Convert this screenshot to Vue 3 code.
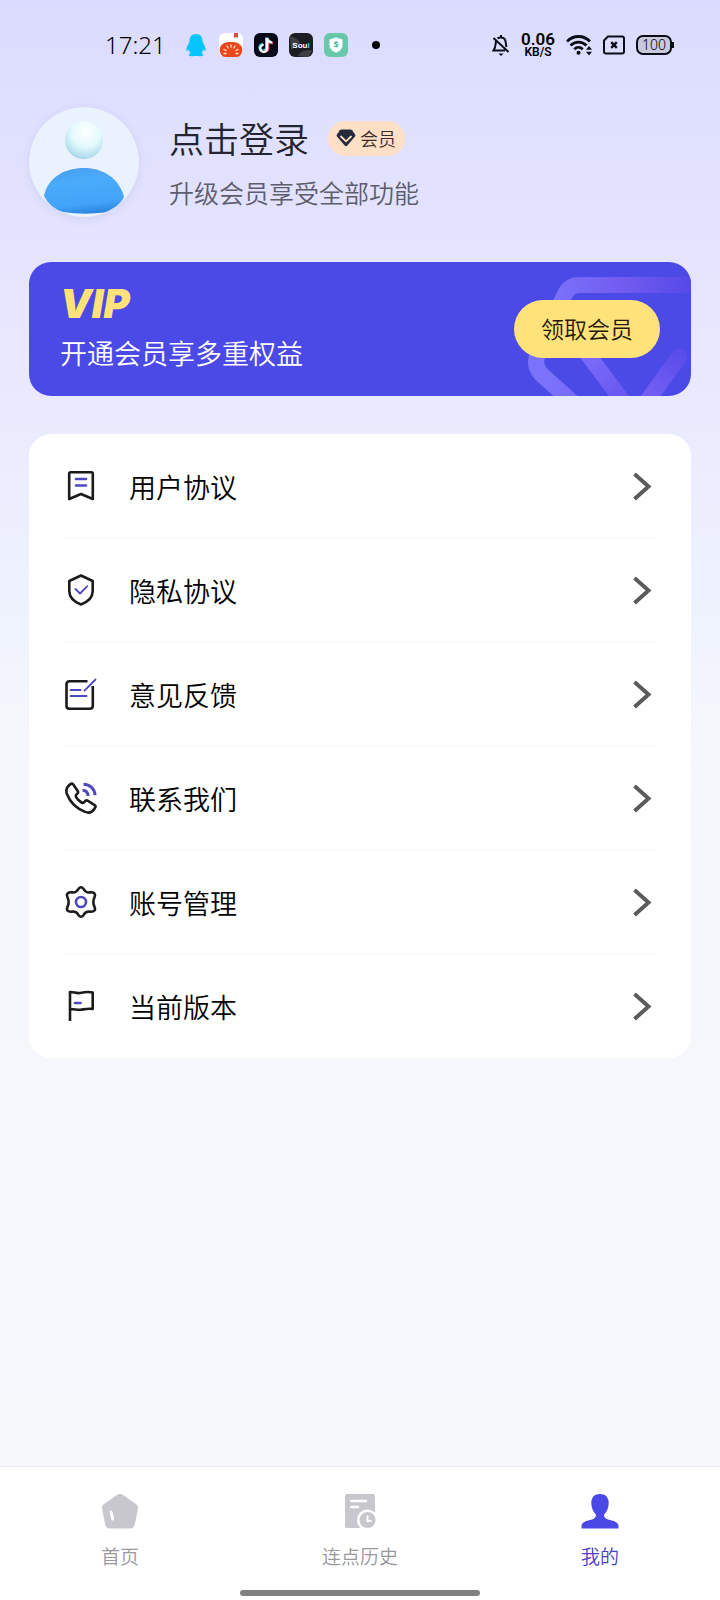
<script setup>
const menu = [
  { id: 'terms', label: '用户协议' },
  { id: 'privacy', label: '隐私协议' },
  { id: 'feedback', label: '意见反馈' },
  { id: 'contact', label: '联系我们' },
  { id: 'account', label: '账号管理' },
  { id: 'version', label: '当前版本' },
]
</script>

<template>
  <div class="page">
    <header class="status">
      <span class="time">17:21</span>
      <div class="apps">
        <svg width="24" height="24" viewBox="0 0 24 24" aria-hidden="true">
          <path d="M12 1C7.400 1 5.300 4.200 5.400 9c-1.400 2.400-3.300 5.900-3.100 8.600.4.900 1.600 0 2.300-1.300.3 1.600 1 2.900 1.900 3.900-1.300.5-2 1.300-1.600 2.300.6 1 5.200.9 7.100.3 1.900.6 6.500.7 7.100-.3.400-1-.3-1.800-1.600-2.300.9-1 1.600-2.300 1.900-3.900.7 1.300 1.900 2.200 2.300 1.300.2-2.700-1.700-6.200-3.100-8.600C18.700 4.200 16.600 1 12 1z" fill="#06c5fd" />
        </svg>
        <svg width="24" height="24" viewBox="0 0 24 24" aria-hidden="true">
          <rect width="24" height="24" rx="6" fill="#fff" />
          <path d="M15 0h4v5l-2-1-2 1z" fill="#cf4f3c" />
          <path d="M1 14.500C2.500 10.800 6 9 12 9s9.500 1.800 11 5.500c.6 2 .4 5-1 7-1 1.700-2.500 2.500-4.500 2.500h-11C4.500 24 3 23.200 2 21.500c-1.400-2-1.600-5-1-7z" fill="#e8481c" />
          <path d="M12 12v2M8 13l1 2M16 13l-1 2M5 16.500l2 1M19 16.500l-2 1M5 20.500h2M17 20.500h2" stroke="#ffe3d2" stroke-width="1.300" stroke-linecap="round" />
        </svg>
        <svg width="24" height="24" viewBox="0 0 24 24" aria-hidden="true">
          <rect width="24" height="24" rx="6" fill="#080918" />
          <g fill="none" stroke-width="2.600">
            <path d="M12.300 4.500v10a3.300 3.300 0 1 1-3.300-3.300M12.300 5c.4 2.500 2.400 4 5 4" stroke="#27e4e2" />
            <path d="M14 6v10a3.500 3.500 0 0 1-5.500 2M14 6c.4 2.500 2.400 4 5 4" stroke="#f83b5c" />
            <path d="M13.200 5v10.500a3.500 3.500 0 1 1-3.500-3.500M13.200 5c.4 2.800 2.400 4.300 5 4.300" stroke="#fff" stroke-width="2.200" />
          </g>
        </svg>
        <svg width="24" height="24" viewBox="0 0 24 24" aria-hidden="true">
          <rect width="24" height="24" rx="6" fill="#1c1d22" />
          <path d="M1 3Q9 5 11 10L2 17zM9 23q3-7 14-6-1 6-6 7z" fill="#55565a" opacity=".6" />
          <text x="12" y="15" text-anchor="middle" class="soul">Sou<tspan fill="#43d9ce">l</tspan></text>
        </svg>
        <svg width="24" height="24" viewBox="0 0 24 24" aria-hidden="true">
          <rect width="24" height="24" rx="6" fill="#67c9aa" />
          <path d="M12 4.500l6.500 2V12c0 3.500-2.500 6-6.500 7.700C8 18 5.500 15.500 5.500 12V6.500z" fill="#fff" />
          <text x="12" y="15" text-anchor="middle" class="coin">$</text>
        </svg>
      </div>
      <span class="dot"></span>
      <div class="signals">
        <svg width="18" height="22" viewBox="0 0 18 22" fill="none" stroke="#0c0d18" stroke-width="2" aria-hidden="true">
          <path d="M5.500 4.500C7 3.200 11 3.200 12.600 5c1.600 1.800 1 5.300 1.900 8M4 7c-.5 3 0 6-2.500 9.500H13M9 1v2M1.500 4l15 14" />
          <path d="M6.500 19.500h5L9 22z" fill="#0c0d18" stroke="none" />
        </svg>
        <div class="speed"><b>0.06</b><span>KB/S</span></div>
        <svg width="26" height="22" viewBox="0 0 26 22" fill="none" stroke="#0c0d18" stroke-width="2.800" aria-hidden="true">
          <path d="M1 7.500C7.500.8 17.500.8 24 7.500M4.500 11.500c4.500-4.600 11.500-4.600 16 0M8.300 15.200c2.400-2.400 6-2.400 8.400 0" />
          <circle cx="12.500" cy="18.800" r="2" fill="#0c0d18" stroke="none" />
          <path d="M20 15.800L23 12l3 3.800zM20 17.800L23 21.600l3-3.800z" fill="#0c0d18" stroke="none" />
        </svg>
        <svg width="22" height="20" viewBox="0 0 22 20" fill="none" stroke="#0c0d18" stroke-width="2" aria-hidden="true">
          <path d="M5 1.500h14q2 0 2 2v13q0 2-2 2H3q-2 0-2-2v-11z" />
          <path d="M8.200 7.200l5.600 5.600M13.800 7.200l-5.600 5.600" stroke-width="2.400" />
        </svg>
        <div class="battery">100</div>
      </div>
    </header>

    <section class="profile">
      <svg class="avatar" width="110" height="110" viewBox="0 0 110 110" role="img" aria-label="头像">
        <defs>
          <radialGradient id="head" cx=".55" cy=".3" r=".75">
            <stop offset="0" stop-color="#fff" />
            <stop offset=".5" stop-color="#e4fafd" />
            <stop offset=".85" stop-color="#b5dfee" />
            <stop offset="1" stop-color="#8fc4dd" />
          </radialGradient>
          <linearGradient id="body" x1=".3" y1="0" x2=".5" y2="1">
            <stop offset="0" stop-color="#489ff0" />
            <stop offset=".3" stop-color="#4aabfb" />
            <stop offset=".8" stop-color="#43a3f8" />
            <stop offset="1" stop-color="#2b86e0" />
          </linearGradient>
        </defs>
        <circle cx="55" cy="55" r="55" fill="#e9f2fd" />
        <circle cx="55" cy="33" r="19" fill="url(#head)" />
        <path d="M15 89C19 70 36 61 55 61s35 10 40 29c-3 7-12 13-20 15.500Q55 108 34 105 21 101 15 89z" fill="url(#body)" />
      </svg>
      <div class="who">
        <div class="name-row">
          <h1>点击登录</h1>
          <span class="badge">
            <svg width="20" height="18" viewBox="0 0 20 18" aria-hidden="true">
              <path d="M5.500.5h9q1 0 1.600.8l3 4.200q.7 1-.1 2l-7.700 9q-1.300 1.500-2.600 0L1 7.500q-.8-1-.1-2l3-4.200Q4.500.5 5.500.5z" fill="#262a3e" />
              <path d="M5 7.500l5 4.800 5-4.800" fill="none" stroke="#ffe0c2" stroke-width="1.800" stroke-linecap="round" />
            </svg>
            会员
          </span>
        </div>
        <p>升级会员享受全部功能</p>
      </div>
    </section>

    <section class="vip">
      <svg class="gem" width="180" height="134" viewBox="0 0 180 134" fill="none" stroke-width="16" aria-hidden="true">
        <defs>
          <linearGradient id="rim" gradientUnits="userSpaceOnUse" x1="40" y1="0" x2="180" y2="0">
            <stop offset="0" stop-color="#7b72fb" />
            <stop offset=".5" stop-color="#725cf0" />
            <stop offset="1" stop-color="#5549e8" />
          </linearGradient>
          <linearGradient id="left" gradientUnits="userSpaceOnUse" x1="66" y1="78" x2="116" y2="140">
            <stop offset="0" stop-color="#8174fd" />
            <stop offset="1" stop-color="#6654ef" />
          </linearGradient>
          <linearGradient id="right" gradientUnits="userSpaceOnUse" x1="168" y1="90" x2="138" y2="136">
            <stop offset="0" stop-color="#5a4cea" />
            <stop offset="1" stop-color="#7460f4" />
          </linearGradient>
        </defs>
        <path d="M180 23H68Q58 23 53 34L27 92q-5 11 3 20l38 34" stroke="url(#rim)" />
        <path d="M168 95l-42 58" stroke="url(#right)" stroke-linecap="round" />
        <path d="M66 78l54 72" stroke="url(#left)" />
      </svg>
      <div class="offer">
        <strong>VIP</strong>
        <p>开通会员享多重权益</p>
      </div>
      <button class="claim" type="button">领取会员</button>
    </section>

    <ul class="menu">
      <li v-for="item in menu" :key="item.id">
        <button type="button">
          <svg class="icon" width="32" height="32" viewBox="0 0 32 32" aria-hidden="true">
            <template v-if="item.id === 'terms'">
              <path d="M4.200 29V3.700q0-1.500 1.500-1.500h20.600q1.500 0 1.500 1.500V29L16 24z" />
              <path class="accent" d="M11 9h10M11 15.500h10" />
            </template>
            <template v-else-if="item.id === 'privacy'">
              <path d="M16 1.500L27.700 7v10c0 6-4 10.500-11.700 13.500C8.300 27.500 4.300 23 4.300 17V7z" />
              <path class="accent thin" d="M10.500 15l4.500 4.500 7.300-7.300" />
            </template>
            <template v-else-if="item.id === 'feedback'">
              <path d="M22.500 3.300H4.500q-3 0-3 3v21.400q0 3 3 3h20.300q3 0 3-3V8" />
              <path class="accent thin" d="M5.500 12h10M5.500 18h16M30.500 1.500L19.500 12.700" />
            </template>
            <template v-else-if="item.id === 'contact'">
              <path d="M8.300 2.500L12.700 9q1 1.600-.5 2.800c-1.700 1.300-1.900 2.200-.7 4 1.200 1.900 3 3.600 5 4.700 1.500.8 2.300.6 3.300-1 .9-1.300 1.900-1.400 3.200-.6l6.600 4.200q1.500 1 .5 2.500c-2 4-5.600 6-10 4.300C11.500 26.600 5 20 1.800 11.800.6 7.800 2.300 4.300 5.800 1.900q1.400-.8 2.500.6z" />
              <path class="accent wide" d="M18.500 2.200c6.500.1 11.300 4.700 11.500 11M17.500 8.300c3.300.2 5.400 2.500 5.600 5.700" />
            </template>
            <template v-else-if="item.id === 'account'">
              <path d="M13.400 3q2.600-3.400 5.200 0c1.500 3 3.200 3.700 6.200 3.400 4.300-.5 6.200 1.300 4.700 4.800-1.600 3.300-1.600 6.300 0 9.600 1.500 3.500-.4 5.300-4.700 4.800-3-.3-4.700.4-6.200 3.400q-2.600 3.400-5.200 0c-1.500-3-3.200-3.700-6.200-3.400-4.300.5-6.200-1.300-4.700-4.800 1.600-3.300 1.600-6.300 0-9.600C1 7.700 2.900 5.900 7.200 6.400c3 .3 4.700-.4 6.200-3.400z" />
              <circle class="accent" cx="16" cy="16" r="5" />
            </template>
            <template v-else>
              <path d="M5 31V2c4 0 6 1.500 10 1 4-.8 8-1.600 12.700-.5V19c-4-1-8 .2-12 .8-4 .2-6-.8-10.700-.8" />
              <path class="accent" d="M10 13h5.500" />
            </template>
          </svg>
          <span>{{ item.label }}</span>
          <svg class="chevron" width="28" height="32" viewBox="0 0 28 32" aria-hidden="true">
            <path d="M6.500 4L20.500 16.500 6.500 29" />
          </svg>
        </button>
      </li>
    </ul>

    <nav class="tabs">
      <a href="#home">
        <svg width="36" height="36" viewBox="0 0 36 36" aria-hidden="true">
          <path d="M15 2q3-2 6 0l13 9q2.500 1.800 1.900 4.800l-3 15.200q-.9 4.500-4.900 4.500H8q-4 0-4.900-4.500L.1 15.800Q-.5 12.800 2 11z" fill="#c8c7cd" />
          <path d="M9 19l1.700 7" stroke="#fff" stroke-width="3" stroke-linecap="round" />
        </svg>
        首页
      </a>
      <a href="#history">
        <svg width="36" height="36" viewBox="0 0 36 36" aria-hidden="true">
          <rect x="3" y="1" width="30" height="34" rx="2" fill="#c8c7cd" />
          <path d="M9 8h15M9 14h7" stroke="#fff" stroke-width="2.500" stroke-linecap="round" />
          <circle cx="25.500" cy="27" r="9.300" fill="#c8c7cd" stroke="#fff" stroke-width="2.500" />
          <path d="M25.500 22.500V28h4" fill="none" stroke="#fff" stroke-width="2" />
        </svg>
        连点历史
      </a>
      <a href="#mine" class="active" aria-current="page">
        <svg width="38" height="36" viewBox="0 0 38 36" aria-hidden="true">
          <path d="M19 1c5.500 0 8.700 3.400 8.700 8.800 0 5-1.700 9-4.700 12 0 2.800 1.500 4 5 4.900 5.500 1.300 9.300 2.500 9.500 6.300V35.500H.5V33c.2-3.800 4-5 9.500-6.300 3.500-.9 5-2.100 5-4.900-3-3-4.700-7-4.700-12C10.300 4.400 13.500 1 19 1z" fill="#4b49e6" />
        </svg>
        我的
      </a>
      <span class="handle"></span>
    </nav>
  </div>
</template>

<style>
body {
  margin: 0;
}
</style>

<style scoped>
.page {
  min-height: 100vh;
  display: flex;
  flex-direction: column;
  box-sizing: border-box;
  background: linear-gradient(#dbdbff 0, #e3e3ff 220px, #ebebfe 440px, #eff3fe 620px, #f6f7fc 740px, #f6f8fc 100%);
  font-family: "Noto Sans CJK SC", sans-serif;
  font-weight: 350;
  color: #000;
}
h1,
p,
ul {
  margin: 0;
  padding: 0;
  font-weight: inherit;
}
svg {
  display: block;
  flex: none;
}
button {
  border: 0;
  font: inherit;
  color: inherit;
  cursor: pointer;
}

.status {
  display: flex;
  align-items: center;
  height: 90px;
  padding: 0 46px 0 105px;
}
.time {
  width: 79px;
  font: 350 24px/32px "Noto Sans", sans-serif;
}
.apps {
  display: flex;
  gap: 11px;
}
.soul {
  font: 700 8px "Liberation Sans", sans-serif;
  fill: #fff;
}
.coin {
  font: 700 9px "Open Sans", sans-serif;
  fill: #4cb896;
}
.dot {
  width: 8px;
  height: 8px;
  margin-left: 24px;
  border-radius: 50%;
  background: #000;
}
.signals {
  display: flex;
  align-items: center;
  gap: 11px;
  margin-left: auto;
}
.speed {
  display: flex;
  flex-direction: column;
  align-items: center;
  font: 600 12px/12px Roboto, sans-serif;
}
.speed b {
  font-size: 17px;
  line-height: 14px;
  font-weight: 600;
}
.battery {
  position: relative;
  box-sizing: border-box;
  width: 36px;
  height: 20px;
  margin-right: 2px;
  border: 2px solid #0c0d18;
  border-radius: 7px;
  background: #c9c9dc;
  font: 350 14px/16px "Noto Sans", sans-serif;
  text-align: center;
}
.battery::after {
  content: "";
  position: absolute;
  right: -4px;
  top: 5px;
  width: 2px;
  height: 6px;
  background: #0c0d18;
}

.profile {
  display: flex;
  align-items: center;
  gap: 30px;
  margin: 17px 29px 0;
}
.avatar {
  border-radius: 50%;
  box-shadow: 0 2px 8px rgba(120, 120, 180, 0.16);
}
.who {
  display: flex;
  flex-direction: column;
  gap: 12px;
}
.name-row {
  display: flex;
  align-items: center;
  gap: 19px;
}
h1 {
  font-size: 35px;
  line-height: 48px;
  color: #23242e;
}
.badge {
  display: flex;
  align-items: center;
  gap: 4px;
  height: 35px;
  padding: 0 9px 0 8px;
  border-radius: 18px;
  background: #ffe0c6;
  font-size: 18px;
  color: #3a2d2a;
}
.who p {
  font-size: 25px;
  line-height: 36px;
  color: #5d5d6d;
}

.vip {
  position: relative;
  display: flex;
  align-items: center;
  justify-content: space-between;
  box-sizing: border-box;
  min-height: 134px;
  margin: 45px 29px 0;
  padding: 0 31px;
  border-radius: 22px;
  overflow: hidden;
  background: #4c4ae6;
}
.gem {
  position: absolute;
  right: 0;
  top: 0;
}
.offer {
  display: flex;
  flex-direction: column;
  gap: 15px;
}
.offer strong {
  font: italic 900 40px/32px Inter, "Liberation Sans", sans-serif;
  color: #ffe27a;
}
.offer p {
  font-size: 27px;
  line-height: 36px;
  color: #fff;
}
.claim {
  position: relative;
  height: 58px;
  padding: 0 27px 2px;
  border-radius: 29px;
  background: #ffe27a;
  font-size: 23px;
  color: #24190a;
}

.menu {
  margin: 38px 29px 40px;
  padding: 1px 35px 1px 36px;
  border-radius: 22px;
  background: #fff;
  list-style: none;
}
.menu li:not(:last-child) {
  border-bottom: 2px solid #f9f9fa;
}
.menu button {
  display: flex;
  align-items: center;
  gap: 32px;
  width: 100%;
  height: 102px;
  padding: 0;
  background: none;
  font-size: 27px;
  text-align: left;
}
.icon {
  fill: none;
  stroke: #1b1b1d;
  stroke-width: 2.6;
  stroke-linejoin: round;
}
.icon .accent {
  stroke: #4f49c0;
  stroke-linecap: round;
}
.icon .thin {
  stroke-width: 1.8;
}
.icon .wide {
  stroke-width: 3;
  stroke-linecap: butt;
}
.chevron {
  margin-left: auto;
  fill: none;
  stroke: #5c5c5f;
  stroke-width: 4;
}

.tabs {
  position: relative;
  display: grid;
  grid-template-columns: repeat(3, 1fr);
  box-sizing: border-box;
  height: 134px;
  margin-top: auto;
  padding-top: 26px;
  border-top: 1px solid #e9ecee;
  background: #fff;
}
.tabs a {
  display: flex;
  flex-direction: column;
  align-items: center;
  gap: 14px;
  font-size: 19px;
  line-height: 26px;
  color: #98989c;
  text-decoration: none;
}
.tabs .active {
  color: #4742c4;
}
.handle {
  position: absolute;
  left: 50%;
  bottom: 4px;
  width: 240px;
  height: 6px;
  margin-left: -120px;
  border-radius: 3px;
  background: #808080;
}
</style>
